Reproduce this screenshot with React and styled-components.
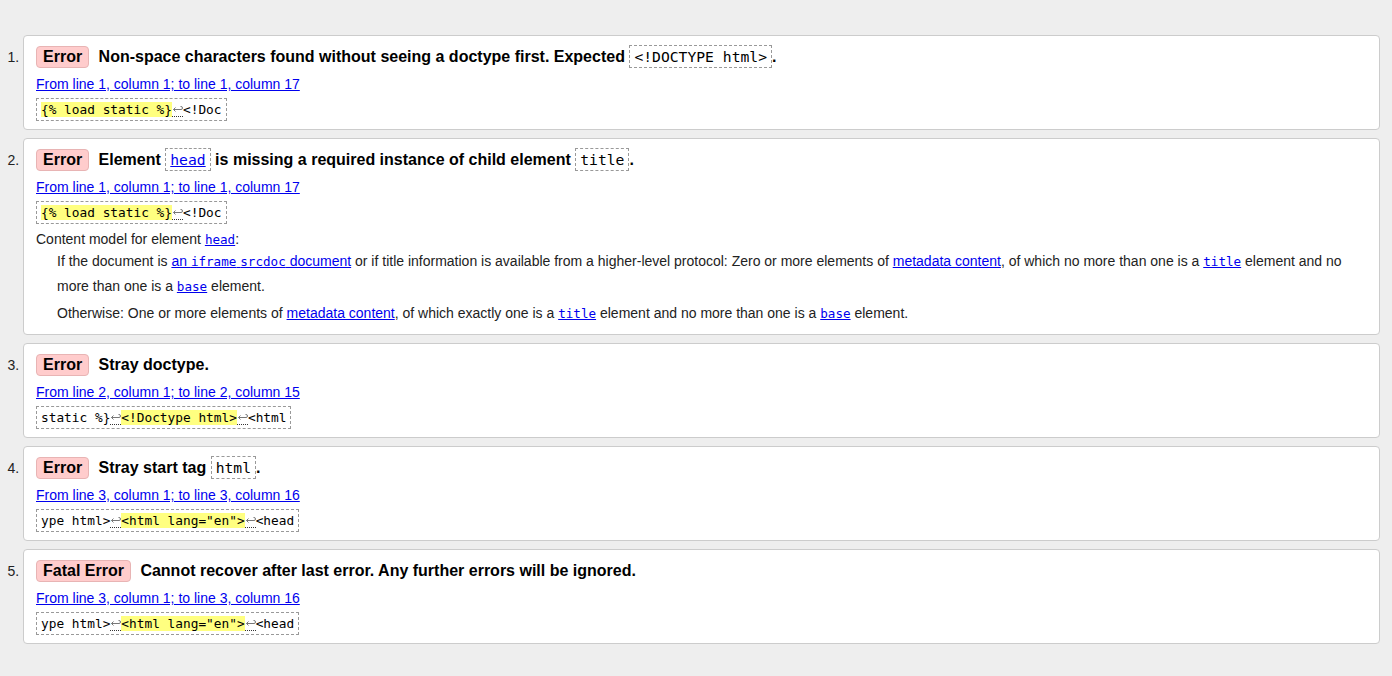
import React from "react";
import styled, { createGlobalStyle } from "styled-components";

const Global = createGlobalStyle`
  html, body { margin: 0; padding: 0; background: #eeeeee; }
  body { font-family: "Liberation Sans", Arial, sans-serif; color: #222; }
`;

const Page = styled.ol`
  margin: 0;
  padding: 35px 12px 20px 23px;
  list-style: decimal outside;
`;

const Item = styled.li`
  background: #fff;
  border: 1px solid #cccccc;
  border-radius: 4px;
  padding: 9px 12px 8px 12px;
  margin-bottom: 8px;
  &::marker {
    font-size: 14px;
    color: #222;
    font-family: "Liberation Sans", Arial, sans-serif;
  }
`;

const Title = styled.p`
  margin: 0;
  font-size: 16px;
  line-height: 24px;
  font-weight: bold;
  color: #000;
`;

const Badge = styled.strong`
  display: inline-block;
  background: #ffcccc;
  border: 1px solid #e8b4b4;
  border-radius: 4px;
  padding: 0 6px;
  line-height: 20px;
  margin-right: 5px;
  color: #000;
`;

const Code = styled.code`
  font-family: "DejaVu Sans Mono", "Liberation Mono", monospace;
  font-size: ${(p) => (p.$big ? "14.7px" : "12.6px")};
  font-weight: normal;
  ${(p) => (p.$boxed ? `border: 1px dashed #999; padding: 2px 4px;` : ``)}
`;

const Link = styled.a`
  color: #0000ee;
  text-decoration: underline;
`;

const Location = styled.p`
  margin: 6px 0 0 0;
  font-size: 14px;
  line-height: 18px;
`;

const ExtractLine = styled.p`
  margin: 5px 0 0 0;
  line-height: 17px;
`;

const Extract = styled.code`
  display: inline-block;
  font-family: "DejaVu Sans Mono", "Liberation Mono", monospace;
  font-size: 12.8px;
  line-height: 17px;
  border: 1px dashed #999;
  padding: 2px 4px;
  color: #000;
`;

const Hi = styled.b`
  font-weight: normal;
  background: #ffff80;
`;

const Lf = styled.span`
  display: inline-block;
  width: 11px;
  height: 14px;
  vertical-align: -3px;
  border-bottom: 1px dotted #333;
  box-sizing: border-box;
  svg {
    display: block;
    margin-top: 3px;
  }
`;

const Note = styled.p`
  margin: 6px 0 0 0;
  font-size: 14px;
  line-height: 18px;
  color: #222;
`;

const Model = styled.dl`
  margin: 0;
  padding: 0 0 0 21px;
  font-size: 14px;
  line-height: 25px;
  color: #222;
`;

const ModelItem = styled.dd`
  margin: ${(p) => (p.$first ? "0" : "2px 0 0 0")};
`;

const NL = () => (
  <Lf title="Line break">
    <svg width="11" height="8" viewBox="0 0 11 8" fill="none" stroke="#777" strokeWidth="1">
      <path d="M8.5 0.5 H9 a1.5 1.5 0 0 1 0 3 H1.5" />
      <path d="M3.5 1.5 L1.5 3.5 L3.5 5.5" />
    </svg>
  </Lf>
);

const issues = [
  {
    kind: "Error",
    title: (
      <>
        Non-space characters found without seeing a doctype first. Expected{" "}
        <Code $big $boxed>&lt;!DOCTYPE html&gt;</Code>.
      </>
    ),
    loc: "From line 1, column 1; to line 1, column 17",
    extract: (
      <>
        <Hi>{"{% load static %}"}</Hi>
        <NL />
        &lt;!Doc
      </>
    ),
  },
  {
    kind: "Error",
    title: (
      <>
        Element{" "}
        <Code $big $boxed>
          <Link href="#">head</Link>
        </Code>{" "}
        is missing a required instance of child element{" "}
        <Code $big $boxed>title</Code>.
      </>
    ),
    loc: "From line 1, column 1; to line 1, column 17",
    extract: (
      <>
        <Hi>{"{% load static %}"}</Hi>
        <NL />
        &lt;!Doc
      </>
    ),
    model: true,
  },
  {
    kind: "Error",
    title: <>Stray doctype.</>,
    loc: "From line 2, column 1; to line 2, column 15",
    extract: (
      <>
        {"static %}"}
        <NL />
        <Hi>&lt;!Doctype html&gt;</Hi>
        <NL />
        &lt;html
      </>
    ),
  },
  {
    kind: "Error",
    title: (
      <>
        Stray start tag <Code $big $boxed>html</Code>.
      </>
    ),
    loc: "From line 3, column 1; to line 3, column 16",
    extract: (
      <>
        ype html&gt;
        <NL />
        <Hi>&lt;html lang="en"&gt;</Hi>
        <NL />
        &lt;head
      </>
    ),
  },
  {
    kind: "Fatal Error",
    title: <>Cannot recover after last error. Any further errors will be ignored.</>,
    loc: "From line 3, column 1; to line 3, column 16",
    extract: (
      <>
        ype html&gt;
        <NL />
        <Hi>&lt;html lang="en"&gt;</Hi>
        <NL />
        &lt;head
      </>
    ),
  },
];

const ContentModel = () => (
  <>
    <Note>
      Content model for element{" "}
      <Code>
        <Link href="#">head</Link>
      </Code>
      :
    </Note>
    <Model>
      <ModelItem $first>
        If the document is{" "}
        <Link href="#">
          an <Code>iframe</Code> <Code>srcdoc</Code> document
        </Link>{" "}
        or if title information is available from a higher-level protocol: Zero or more
        elements of <Link href="#">metadata content</Link>, of which no more than one is a{" "}
        <Code>
          <Link href="#">title</Link>
        </Code>{" "}
        element and no more than one is a{" "}
        <Code>
          <Link href="#">base</Link>
        </Code>{" "}
        element.
      </ModelItem>
      <ModelItem>
        Otherwise: One or more elements of <Link href="#">metadata content</Link>, of which
        exactly one is a{" "}
        <Code>
          <Link href="#">title</Link>
        </Code>{" "}
        element and no more than one is a{" "}
        <Code>
          <Link href="#">base</Link>
        </Code>{" "}
        element.
      </ModelItem>
    </Model>
  </>
);

export default function App() {
  return (
    <>
      <Global />
      <Page>
        {issues.map((it, i) => (
          <Item key={i}>
            <Title>
              <Badge>{it.kind}</Badge> {it.title}
            </Title>
            <Location>
              <Link href="#">{it.loc}</Link>
            </Location>
            <ExtractLine>
              <Extract>{it.extract}</Extract>
            </ExtractLine>
            {it.model && <ContentModel />}
          </Item>
        ))}
      </Page>
    </>
  );
}
